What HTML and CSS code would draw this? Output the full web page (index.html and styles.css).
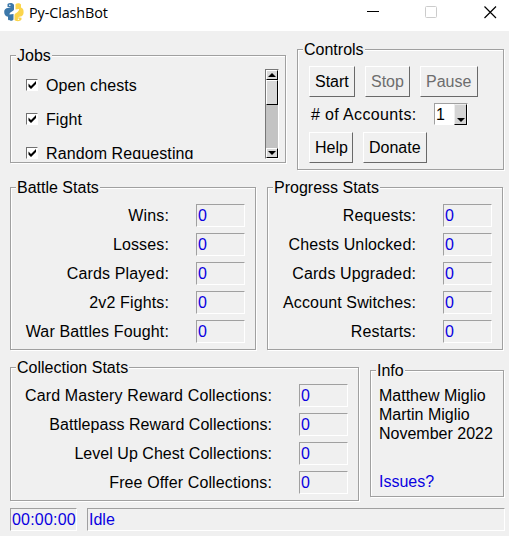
FILE: index.html
```html
<!DOCTYPE html>
<html lang="en">
<head>
<meta charset="utf-8">
<title>Py-ClashBot</title>
<link rel="stylesheet" href="styles.css">
</head>
<body>
<header class="titlebar">
  <svg class="logo" width="20" height="20" viewBox="0 0 20 20">
    <path fill="#3c78aa" d="M3.500 2C5.500.5 9 .8 10 3V7.500C9.500 9.500 5.500 9.500 5.500 12.500L9.500 12V17.500C8.500 19.200 5 19 4 17.500V14.800C1.500 14.500.2 12.500.2 10 .2 7.500 1.500 6.200 4 6L7 5.500 3.500 5z"/>
    <path fill="#fbd54c" d="M11.500 2.200C13 .8 16 1 17 2.500V5.500C19 6 19.800 8 19.600 10.500 19.500 13 18.300 14.200 16.500 14.600L13.500 15.200 17.500 15.700V17.500C16.300 19.500 12.500 19.800 10.500 18V13C11 10.500 15.200 10.500 15 7L11.500 7.500z"/>
    <circle cx="5.800" cy="3.300" r=".8" fill="#fff"/><circle cx="14.500" cy="17.300" r=".8" fill="#fff"/>
  </svg>
  <h1 class="title">Py-ClashBot</h1>
  <svg class="window-buttons" width="132" height="14" viewBox="0 0 132 14" fill="none">
    <path d="M1 5.500h12" stroke="#000"/>
    <rect x="59.500" y=".5" width="11" height="11" rx="1" stroke="#ccc"/>
    <path d="M118.500.5l11.500 11.500M130 .5l-11.500 11.500" stroke="#000" stroke-width="1.200"/>
  </svg>
</header>
<main>
  <div class="row">
    <section class="group jobs">
      <h2 class="legend">Jobs</h2>
      <div class="jobs-body">
        <div class="job-list">
          <div class="job"><svg class="check" viewBox="0 0 10 10"><path d="M1.500 3.500v3l2.500 2.500 5-5v-3l-5 5z"/></svg>Open chests</div>
          <div class="job"><svg class="check" viewBox="0 0 10 10"><path d="M1.500 3.500v3l2.500 2.500 5-5v-3l-5 5z"/></svg>Fight</div>
          <div class="job"><svg class="check" viewBox="0 0 10 10"><path d="M1.500 3.500v3l2.500 2.500 5-5v-3l-5 5z"/></svg>Random Requesting</div>
        </div>
        <div class="scrollbar">
          <div class="arrow"><svg width="8" height="4"><path d="M0 4l4-4 4 4z"/></svg></div>
          <div class="thumb"></div>
          <div class="arrow down"><svg width="8" height="4"><path d="M0 0l4 4 4-4z"/></svg></div>
        </div>
      </div>
    </section>
    <section class="group controls">
      <h2 class="legend">Controls</h2>
      <div class="buttons">
        <div class="button start">Start</div><div class="button stop">Stop</div><div class="button pause">Pause</div>
      </div>
      <div class="accounts"><span class="accounts-label"># of Accounts:</span>
        <div class="spin"><span class="spin-value">1</span><div class="spin-arrow"><svg width="8" height="4"><path d="M0 0l4 4 4-4z"/></svg></div></div>
      </div>
      <div class="buttons">
        <div class="button help">Help</div><div class="button donate">Donate</div>
      </div>
    </section>
  </div>
  <div class="row stats-row">
    <section class="group battle">
      <h2 class="legend">Battle Stats</h2>
      <dl class="stats">
        <dt>Wins:</dt><dd>0</dd>
        <dt>Losses:</dt><dd>0</dd>
        <dt>Cards Played:</dt><dd>0</dd>
        <dt>2v2 Fights:</dt><dd>0</dd>
        <dt>War Battles Fought:</dt><dd>0</dd>
      </dl>
    </section>
    <section class="group progress">
      <h2 class="legend">Progress Stats</h2>
      <dl class="stats">
        <dt>Requests:</dt><dd>0</dd>
        <dt>Chests Unlocked:</dt><dd>0</dd>
        <dt>Cards Upgraded:</dt><dd>0</dd>
        <dt>Account Switches:</dt><dd>0</dd>
        <dt>Restarts:</dt><dd>0</dd>
      </dl>
    </section>
  </div>
  <div class="row collection-row">
    <section class="group collection">
      <h2 class="legend">Collection Stats</h2>
      <dl class="stats">
        <dt>Card Mastery Reward Collections:</dt><dd>0</dd>
        <dt class="plain">Battlepass Reward Collections:</dt><dd>0</dd>
        <dt class="plain">Level Up Chest Collections:</dt><dd>0</dd>
        <dt>Free Offer Collections:</dt><dd>0</dd>
      </dl>
    </section>
    <section class="group info">
      <h2 class="legend">Info</h2>
      <p class="authors">Matthew Miglio<br>Martin Miglio<br>November 2022</p>
      <p class="issues">Issues?</p>
    </section>
  </div>
  <footer class="status">
    <div class="cell time">00:00:00</div>
    <div class="cell message">Idle</div>
  </footer>
</main>
</body>
</html>
```
FILE: styles.css
```css
* { box-sizing: border-box; }
body {
  margin: 0;
  width: 509px;
  height: 536px;
  overflow: hidden;
  background: #f0f0f0;
  color: #000;
  font: 16px/19px "Liberation Sans", Arial, sans-serif;
}
h1, h2, p, dl, dd { margin: 0; font-size: inherit; font-weight: normal; }
svg { display: block; }

.titlebar { display: flex; height: 31px; background: #fff; padding: 2px 12px 0 4px; }
.title { margin: 1px 0 0 5px; flex: 1; font: 14.4px/20px "Open Sans", "Noto Sans", sans-serif; letter-spacing: -0.1px; }
.window-buttons { margin: 4px -1px 0 0; }

main { padding: 18px 0 0 10px; }
.row { display: flex; align-items: flex-start; }
.stats-row { margin-top: 17px; }
.collection-row { margin-top: 17px; }

/* Etched frame: gray line with a white line below and to the right */
.group { border: 1px solid #a0a0a0; box-shadow: inset 1px 1px #fff, 1px 1px #fff; }
.legend { width: max-content; margin: -10px 0 0 5px; padding: 0 1px; height: 19px; background: #f0f0f0; white-space: nowrap; }

.jobs { width: 276px; height: 108px; margin: 6px 11px 0 0; }
.jobs-body { display: flex; justify-content: space-between; height: 94px; padding: 4px 6px 0 15px; }
.job-list { height: 90px; overflow: hidden; padding-top: 7px; }
.job { display: flex; align-items: center; gap: 8px; height: 19px; margin-bottom: 15px; letter-spacing: 0.1px; }
.check { width: 12px; height: 12px; margin-bottom: 1px; background: #fff; border: 1px solid; border-color: #707070 #fff #fff #707070; }
.scrollbar { display: flex; flex-direction: column; width: 14px; height: 90px; background: #c3c3c3; border: 1px solid; border-color: #777 #fff #fff #777; }
.arrow, .thumb { background: #d9d9d9; border: 1px solid; border-color: #fff #000 #000 #fff; }
.arrow { display: flex; align-items: center; justify-content: center; height: 10px; }
.arrow svg { flex: none; }
.thumb { height: 25px; }
.down { margin-top: auto; }

.controls { width: 207px; height: 121px; }
.buttons { display: flex; gap: 10px; padding: 7px 0 0 11px; }
.button { height: 31px; padding: 5px 0 0 5px; border: 1px solid; border-color: #fff #696969 #696969 #fff; }
.start { width: 46px; }
.stop { width: 45px; color: #6d6d6d; }
.pause { width: 58px; color: #6d6d6d; }
.help { width: 44px; }
.donate { width: 64px; }
.accounts { display: flex; height: 28px; padding: 6px 0 0 13px; }
.accounts-label { width: 123px; padding-top: 2px; letter-spacing: 0.36px; }
.spin { display: flex; width: 34px; height: 22px; background: #fff; border: 1px solid; border-color: #a0a0a0 #fff #fff #a0a0a0; }
.spin-value { width: 20px; padding: 1px 0 0 1px; }
.spin-arrow { display: flex; align-items: flex-end; justify-content: center; width: 13px; height: 21px; padding-bottom: 2px; background: #d4d4d4; border: 1px solid; border-color: #eee #000 #000 #eee; }
.spin-arrow svg { flex: none; }

.battle { width: 246px; height: 163px; margin-right: 11px; }
.progress { width: 236px; height: 163px; }
.collection { width: 349px; height: 134px; margin-right: 11px; }
.stats { display: grid; grid-template-columns: 1fr 49px; grid-auto-rows: 23px; row-gap: 6px; column-gap: 27px; padding: 7px 10px 0 0; }
.stats dt { text-align: right; padding-top: 2px; white-space: nowrap; letter-spacing: 0.13px; }
.stats .plain { letter-spacing: 0.04px; }
.stats dd, .cell { height: 23px; border: 1px solid; border-color: #a0a0a0 #fff #fff #a0a0a0; padding: 1px 0 0 1px; color: #0a00e0; }
.info { width: 134px; height: 127px; margin-top: 3px; }
.authors { padding: 6px 0 0 8px; white-space: nowrap; }
.issues { padding: 29px 0 0 8px; color: #0a00e0; }

.status { display: flex; gap: 10px; margin-top: 7px; }
.time { width: 67px; letter-spacing: 0.2px; }
.message { width: 418px; }
```
